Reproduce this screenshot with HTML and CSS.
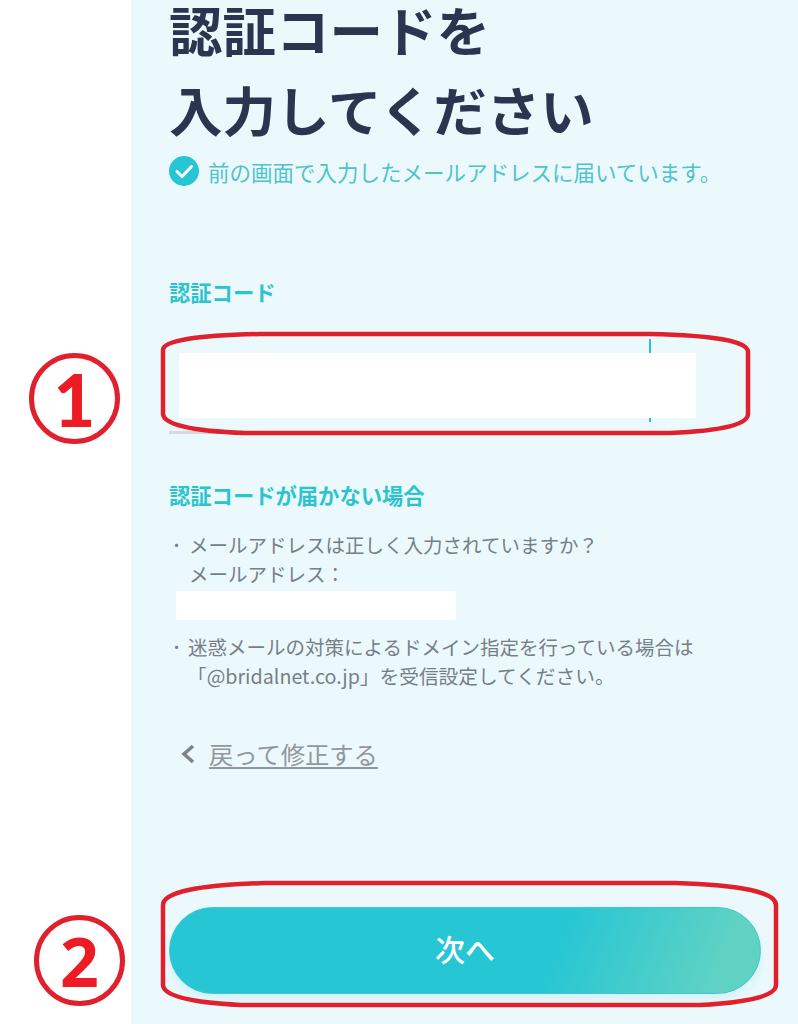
FILE: index.html
```html
<!DOCTYPE html>
<html lang="ja">
<head>
<meta charset="utf-8">
<title>認証コード</title>
<link rel="stylesheet" href="styles.css">
</head>
<body>
<div class="page">
  <aside class="gutter"></aside>
  <main class="panel">
    <h1 class="title"><span>認証コードを</span><span>入力してください</span></h1>
    <p class="notice">
      <svg class="check" viewBox="0 0 30 30" aria-hidden="true"><circle cx="15" cy="15" r="15" fill="#26c6d4"/><path d="M8 15.5l5 5 9.5-10" fill="none" stroke="#fff" stroke-width="3" stroke-linecap="round" stroke-linejoin="round"/></svg>
      <span>前の画面で入力したメールアドレスに届いています。</span>
    </p>
    <h2 class="label code-label">認証コード</h2>
    <div class="code-field">
      <span class="tick"></span>
      <div class="code-mask"></div>
    </div>
    <h2 class="label help-label">認証コードが届かない場合</h2>
    <ul class="help">
      <li>メールアドレスは正しく入力されていますか？<br>メールアドレス：<div class="mail-mask"></div></li>
      <li class="second">迷惑メールの対策によるドメイン指定を行っている場合は<br><span class="quote">「@bridalnet.co.jp」を受信設定してください。</span></li>
    </ul>
    <a class="back" href="#">
      <svg class="chev" viewBox="0 0 14 20" aria-hidden="true"><path d="M12 2L3 10l9 8" fill="none" stroke="#7f8488" stroke-width="3.6"/></svg>
      <span>戻って修正する</span>
    </a>
    <button class="next" type="button">次へ</button>
  </main>
</div>
<svg class="marks" viewBox="0 0 798 1024" aria-hidden="true">
  <path d="M260 334H650Q748 336 748 352V414Q748 430 670 433H245Q164 430 163 414V350Q163 336 260 334Z" fill="none" stroke="#e0202c" stroke-width="4.5"/>
  <path d="M265 883H675Q776 886 776 905V985Q776 1001 700 1005H240Q164 1001 163 985V905Q163 886 265 883Z" fill="none" stroke="#e0202c" stroke-width="4.5"/>
</svg>
<div class="num num-one">1</div>
<div class="num num-two">2</div>
</body>
</html>
```
FILE: styles.css
```css
* { box-sizing: border-box; }
html, body { margin: 0; padding: 0; }
body {
  width: 798px;
  height: 1024px;
  overflow: hidden;
  position: relative;
  background: #fff;
  font-family: "Noto Sans CJK JP", "Noto Sans", sans-serif;
}
.page { display: flex; height: 1024px; }
.gutter { width: 131px; flex: none; }
.panel {
  flex: 1;
  background: #ecf9fc;
  padding-left: 38px;
  display: flex;
  flex-direction: column;
  align-items: flex-start;
}
.title {
  margin: 0;
  display: flex;
  flex-direction: column;
  gap: 22px;
  font-size: 53.5px;
  line-height: 58px;
  font-weight: 700;
  color: #2a3550;
}
.title span { display: block; }
.notice {
  margin: 18px 0 0;
  display: flex;
  align-items: center;
  gap: 9px;
  height: 30px;
  font-size: 21.5px;
  color: #4fc3cb;
  white-space: nowrap;
}
.check { width: 30px; height: 30px; flex: none; }
.label {
  margin: 0;
  font-size: 21.3px;
  line-height: 30px;
  font-weight: 700;
  color: #2cc3cf;
}
.code-label { margin-top: 91px; }
.code-field {
  position: relative;
  margin-top: 32px;
  width: 482px;
  height: 95px;
  border-bottom: 3px solid #d6dadc;
}
.code-mask {
  position: absolute;
  left: 10px;
  top: 14px;
  width: 517px;
  height: 65px;
  background: #fff;
}
.tick {
  position: absolute;
  left: 480px;
  top: 0;
  width: 2px;
  height: 83px;
  background: #2cc3cf;
}
.help-label { margin-top: 46px; }
.help {
  list-style: none;
  margin: 20px 0 0;
  padding: 0;
  font-size: 19.5px;
  line-height: 29px;
  color: #767f88;
}
.help li { position: relative; padding-left: 20px; white-space: nowrap; }
.help li::before {
  content: "・";
  position: absolute;
  left: 0;
  top: 0;
  font-size: 15px;
}
.help .second { margin-top: 12px; padding-left: 19px; }
.quote { margin-left: -1px; font-size: 19.7px; }
.mail-mask {
  margin: 3px 0 0 -13px;
  width: 280px;
  height: 29px;
  background: #fff;
}
.back {
  margin: 47px 0 0 12px;
  display: flex;
  align-items: center;
  gap: 14px;
  font-size: 24.3px;
  line-height: 34px;
  color: #92979b;
  text-decoration: none;
}
.back span { text-decoration: underline; text-underline-offset: 3px; }
.chev { width: 14px; height: 20px; flex: none; }
.next {
  margin-top: 136px;
  width: 592px;
  height: 87px;
  border: 1px solid #3fc6d0;
  border-radius: 44px;
  background: linear-gradient(112deg, #26c6d4 0%, #26c6d4 64%, #5fd2c4 92%);
  box-shadow: 0 6px 10px rgba(38, 198, 212, 0.12);
  color: #fff;
  font-family: inherit;
  font-size: 30px;
  font-weight: 500;
  padding: 0 0 6px;
}
.marks {
  position: absolute;
  left: 0;
  top: 0;
  width: 798px;
  height: 1024px;
  pointer-events: none;
}
.num {
  position: absolute;
  width: 91px;
  height: 91px;
  border: 5.5px solid #e0202c;
  border-radius: 50%;
  display: flex;
  align-items: center;
  justify-content: center;
  font-weight: 700;
  color: #ed1c24;
}
.num-one { left: 29px; top: 353px; font-family: "Lato", sans-serif; font-size: 72px; font-weight: 900; }
.num-two { left: 34px; top: 915px; font-family: "Open Sans", sans-serif; font-size: 68px; }
```
